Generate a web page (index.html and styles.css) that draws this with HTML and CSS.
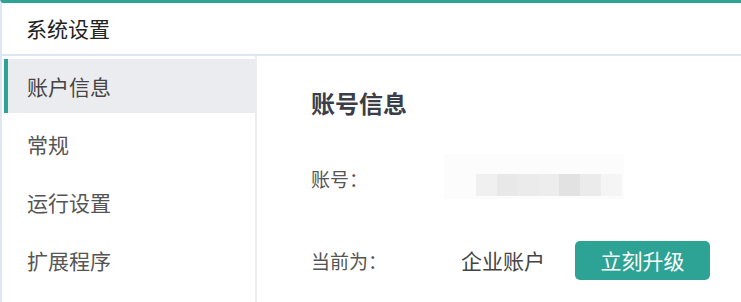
FILE: index.html
```html
<!DOCTYPE html>
<html lang="zh-CN">
<head>
<meta charset="utf-8">
<link rel="stylesheet" href="styles.css">
</head>
<body>
<div class="app">
  <header class="header">系统设置</header>
  <div class="main">
    <nav class="sidebar">
      <div class="item active">账户信息</div>
      <div class="item">常规</div>
      <div class="item">运行设置</div>
      <div class="item">扩展程序</div>
    </nav>
    <section class="content">
      <h2 class="title">账号信息</h2>
      <div class="row row-account">
        <span class="label">账号：</span>
        <span class="blur">
          <span class="px p1"></span><span class="px p2"></span><span class="px p3"></span><span class="px p4"></span><span class="px p5"></span><span class="px p6"></span><span class="px p7"></span>
        </span>
      </div>
      <div class="row row-plan">
        <span class="label">当前为：</span>
        <span class="value">企业账户</span>
        <button class="upgrade">立刻升级</button>
      </div>
    </section>
  </div>
</div>
</body>
</html>
```

FILE: styles.css
```css
* { box-sizing: border-box; }
html, body { margin: 0; padding: 0; background: #fff; }
body {
  font-family: "Noto Sans CJK SC", "Noto Sans", sans-serif;
  width: 741px;
  height: 302px;
  overflow: hidden;
}
.app {
  border-top: 3px solid #2ca394;
  border-left: 2px solid #dde6f3;
  height: 302px;
}
.header {
  height: 53px;
  border-bottom: 2px solid #dde6f3;
  padding-left: 24px;
  font-size: 21px;
  line-height: 51px;
  color: #222;
}
.main {
  display: flex;
  height: 246px;
}
.sidebar {
  width: 255px;
  border-right: 2px solid #ebedf1;
  padding: 3px 0 0 2px;
}
.item {
  height: 54px;
  margin-bottom: 4px;
  line-height: 54px;
  padding-left: 19px;
  border-left: 4px solid transparent;
  font-size: 21px;
  color: #555;
}
.item.active {
  background: #ebecf0;
  border-left-color: #2ca394;
  color: #444;
}
.content {
  flex: 1;
  padding: 31px 0 0 54px;
}
.title {
  margin: 0;
  font-size: 24px;
  line-height: 32px;
  font-weight: bold;
  color: #3b3e48;
}
.row {
  display: flex;
  align-items: center;
}
.row-account {
  margin-top: 39px;
  height: 40px;
}
.row-plan {
  margin-top: 42px;
  height: 40px;
}
.label {
  width: 150px;
  font-size: 19px;
  color: #555;
}
.value {
  font-size: 21px;
  color: #444;
  width: 114px;
}
.blur {
  display: flex;
  align-items: flex-end;
  height: 45px;
  width: 180px;
  margin-left: -17px;
  margin-top: -4px;
  padding: 0 2px 3px 32px;
  background: #fcfcfc;
}
.px { height: 22px; flex: 1; }
.p1 { background: #f0f0f0; }
.p2 { background: #e8e8e8; }
.p3 { background: #ebebeb; }
.p4 { background: #ededed; }
.p5 { background: #e2e2e2; }
.p6 { background: #ebebeb; }
.p7 { background: #f5f5f5; }
.upgrade {
  width: 135px;
  height: 39px;
  border: none;
  border-radius: 5px;
  background: #2ca394;
  color: #fff;
  font-family: inherit;
  font-size: 21px;
  padding: 0;
  cursor: pointer;
}
```
